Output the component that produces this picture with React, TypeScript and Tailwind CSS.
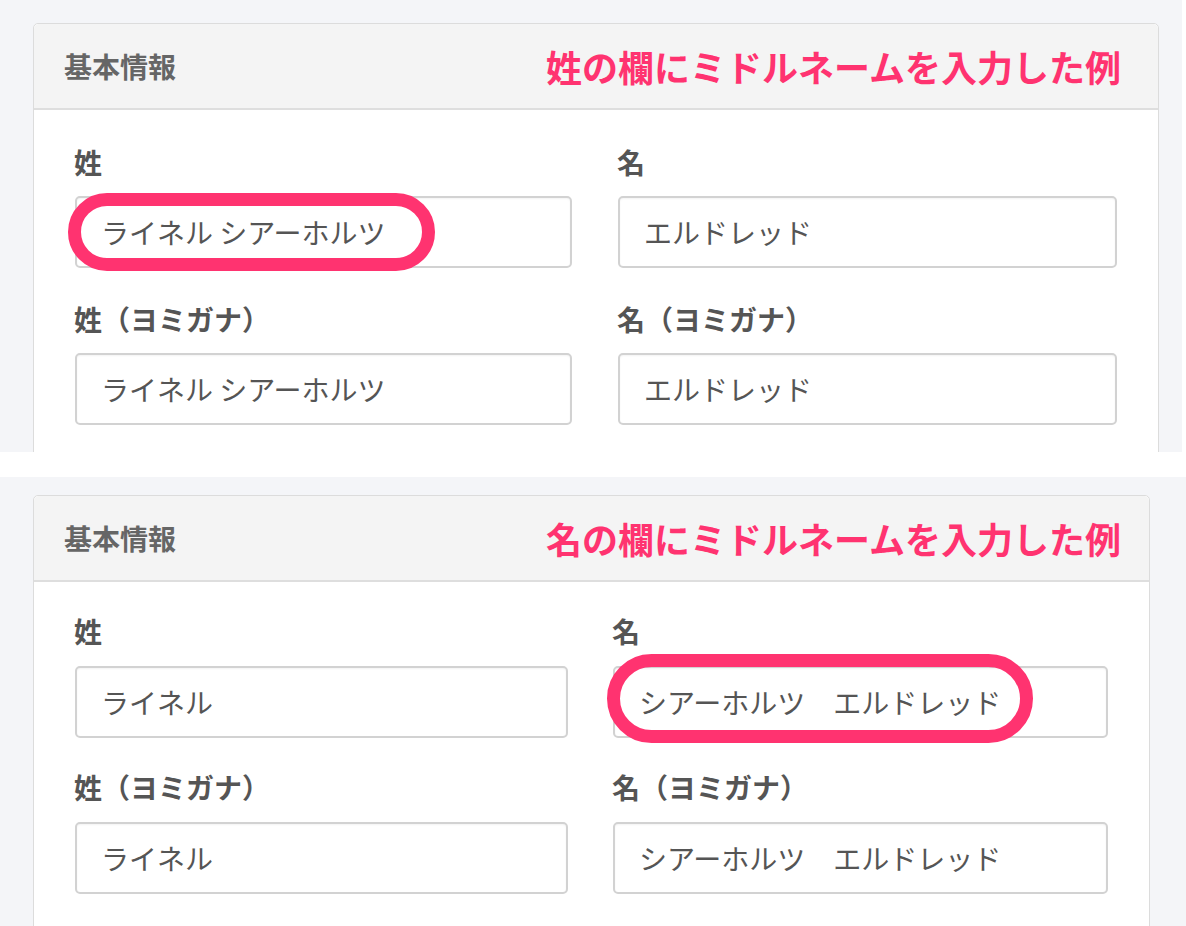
type Field = {
  label: string;
  value: string;
  oval?: string;
};

type PanelProps = {
  title: string;
  fields: Field[];
  width: string;
  headPad: string;
  cols: string;
  bodyPad: string;
  rowGap: string;
  labelGap: string;
};

function Panel({ title, fields, width, headPad, cols, bodyPad, rowGap, labelGap }: PanelProps) {
  return (
    <div className={`${width} shrink-0 rounded-[5px] border border-[#dcdcdc] bg-white`}>
      <div className={`flex h-[86px] items-center justify-between rounded-t-[5px] border-b-2 border-[#dedede] bg-[#f4f4f4] pl-[30px] ${headPad}`}>
        <span className="text-[28px] font-bold text-[#666]">基本情報</span>
        <span className="text-[36px] font-bold text-[#ff3370]">{title}</span>
      </div>
      <div className={`grid pb-[80px] pl-[41px] ${cols} ${bodyPad} ${rowGap}`}>
        {fields.map((f) => (
          <div key={f.label}>
            <div className={`-ml-[1px] h-[40px] text-[28px] leading-[40px] font-bold text-[#555] ${labelGap}`}>
              {f.label}
            </div>
            <div className="relative">
              <input
                readOnly
                value={f.value}
                className="h-[72px] w-full rounded-[5px] border-2 border-[#d2d2d2] bg-white pb-[1px] pl-[24px] text-[28px] text-[#555] shadow-[inset_0_1px_2px_rgba(0,0,0,0.05)] outline-none"
              />
              {f.oval && (
                <div className={`pointer-events-none absolute rounded-full border-[13px] border-[#ff3370] ${f.oval}`} />
              )}
            </div>
          </div>
        ))}
      </div>
    </div>
  );
}

export default function App() {
  return (
    <div className="h-[926px] w-[1186px] overflow-hidden bg-white font-['Noto_Sans_CJK_JP','Noto_Sans',sans-serif]">
      <section className="h-[452px] w-[1182px] overflow-hidden bg-[#f4f5f8] pl-[33px] pt-[23px]">
        <Panel
          title="姓の欄にミドルネームを入力した例"
          width="w-[1126px]"
          headPad="pr-[37px]"
          cols="grid-cols-[497px_499px] gap-x-[46px]"
          bodyPad="pt-[32px]"
          rowGap="gap-y-[31px]"
          labelGap="mb-[14px]"
          fields={[
            {
              label: "姓",
              value: "ライネル シアーホルツ",
              oval: "left-[-7px] top-[-3px] h-[78px] w-[367px]",
            },
            { label: "名", value: "エルドレッド" },
            { label: "姓（ヨミガナ）", value: "ライネル シアーホルツ" },
            { label: "名（ヨミガナ）", value: "エルドレッド" },
          ]}
        />
      </section>
      <div className="h-[25px] bg-white" />
      <section className="h-[449px] overflow-hidden bg-[#f4f5f8] pl-[33px] pt-[18px]">
        <Panel
          title="名の欄にミドルネームを入力した例"
          width="w-[1117px]"
          headPad="pr-[28px]"
          cols="grid-cols-[493px_495px] gap-x-[45px]"
          bodyPad="pt-[29px]"
          rowGap="gap-y-[29px]"
          labelGap="mb-[15px]"
          fields={[
            { label: "姓", value: "ライネル" },
            {
              label: "名",
              value: "シアーホルツ　エルドレッド",
              oval: "left-[-6px] top-[-12px] h-[89px] w-[426px]",
            },
            { label: "姓（ヨミガナ）", value: "ライネル" },
            { label: "名（ヨミガナ）", value: "シアーホルツ　エルドレッド" },
          ]}
        />
      </section>
    </div>
  );
}
